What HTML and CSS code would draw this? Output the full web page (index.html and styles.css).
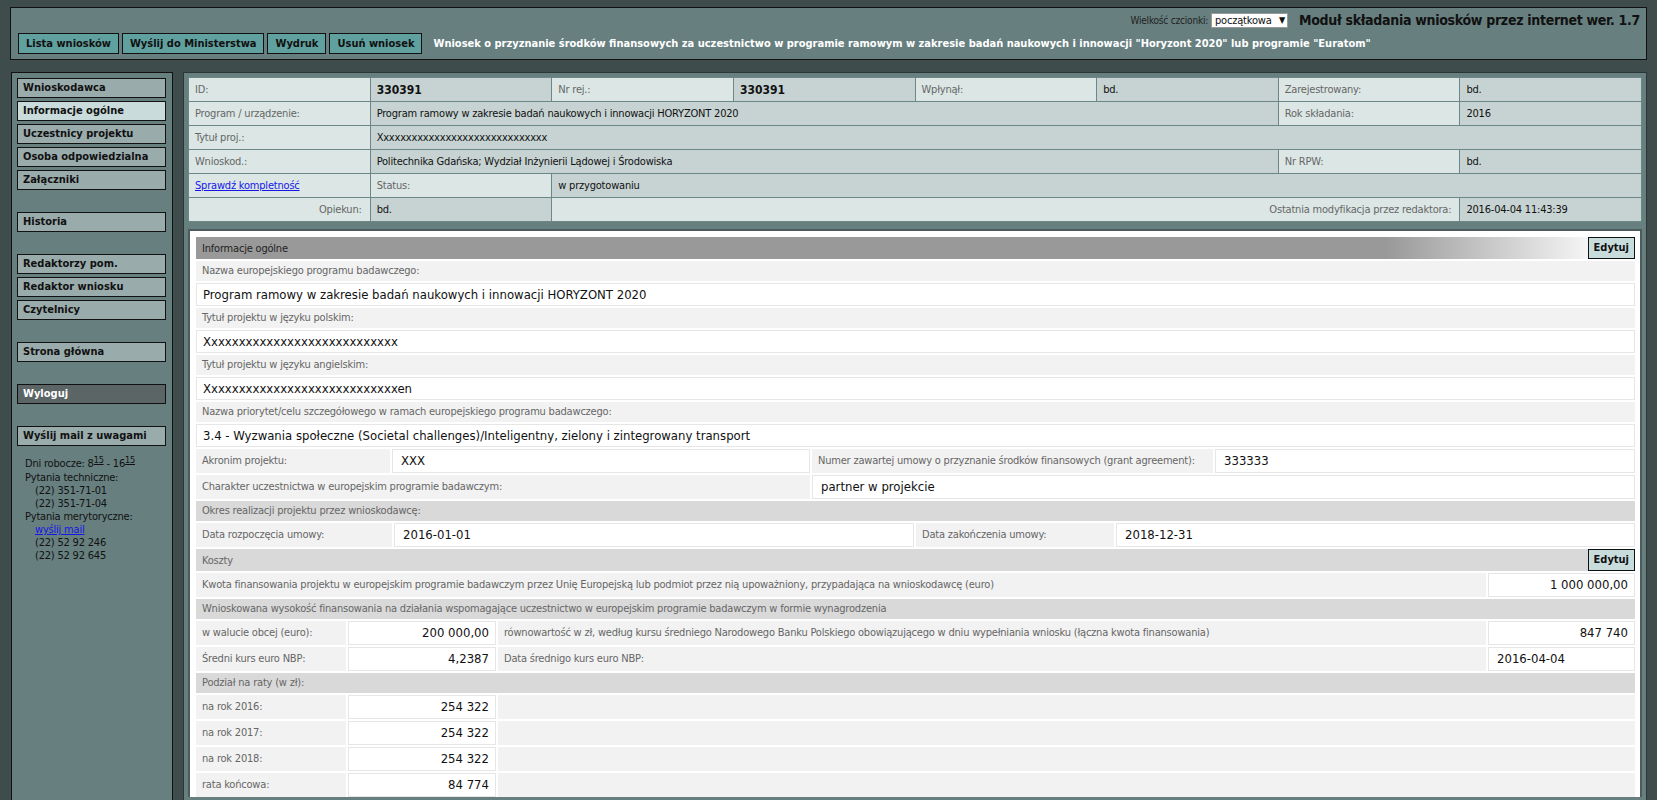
FILE: index.html
```html
<!DOCTYPE html>
<html lang="pl">
<head>
<meta charset="utf-8">
<title>Moduł składania wniosków</title>
<link rel="stylesheet" href="styles.css">
</head>
<body>
<div class="page">
  <header class="top">
    <div class="top-row1">
      <span class="fs-label">Wielkość czcionki:</span>
      <span class="select">początkowa<span class="arrow">▼</span></span>
      <span class="app-title">Moduł składania wniosków przez internet wer. 1.7</span>
    </div>
    <div class="top-row2">
      <span class="btn">Lista wniosków</span>
      <span class="btn">Wyślij do Ministerstwa</span>
      <span class="btn">Wydruk</span>
      <span class="btn">Usuń wniosek</span>
      <span class="doc-title">Wniosek o przyznanie środków finansowych za uczestnictwo w programie ramowym w zakresie badań naukowych i innowacji "Horyzont 2020" lub programie "Euratom"</span>
    </div>
  </header>

  <div class="layout">
    <aside class="sidebar">
      <div class="nav-item">Wnioskodawca</div>
      <div class="nav-item active">Informacje ogólne</div>
      <div class="nav-item">Uczestnicy projektu</div>
      <div class="nav-item">Osoba odpowiedzialna</div>
      <div class="nav-item">Załączniki</div>
      <div class="nav-item group">Historia</div>
      <div class="nav-item group">Redaktorzy pom.</div>
      <div class="nav-item">Redaktor wniosku</div>
      <div class="nav-item">Czytelnicy</div>
      <div class="nav-item group">Strona główna</div>
      <div class="nav-item group dark">Wyloguj</div>
      <div class="nav-item group">Wyślij mail z uwagami</div>
      <div class="contact">
        <div>Dni robocze: 8<span class="sup">15</span> - 16<span class="sup">15</span></div>
        <div>Pytania techniczne:</div>
        <div class="ind">(22) 351-71-01</div>
        <div class="ind">(22) 351-71-04</div>
        <div>Pytania merytoryczne:</div>
        <div class="ind"><a href="#">wyślij mail</a></div>
        <div class="ind">(22) 52 92 246</div>
        <div class="ind">(22) 52 92 645</div>
      </div>
    </aside>

    <main class="main">
      <table class="info">
        <colgroup>
          <col class="c"><col class="c"><col class="c"><col class="c"><col class="c"><col class="c"><col class="c"><col class="c">
        </colgroup>
        <tr>
          <td class="l">ID:</td><td class="v b">330391</td>
          <td class="l">Nr rej.:</td><td class="v b">330391</td>
          <td class="l">Wpłynął:</td><td class="v">bd.</td>
          <td class="l">Zarejestrowany:</td><td class="v">bd.</td>
        </tr>
        <tr>
          <td class="l">Program / urządzenie:</td><td class="v" colspan="5">Program ramowy w zakresie badań naukowych i innowacji HORYZONT 2020</td>
          <td class="l">Rok składania:</td><td class="v">2016</td>
        </tr>
        <tr>
          <td class="l">Tytuł proj.:</td><td class="v" colspan="7">Xxxxxxxxxxxxxxxxxxxxxxxxxxxxxx</td>
        </tr>
        <tr>
          <td class="l">Wnioskod.:</td><td class="v" colspan="5">Politechnika Gdańska; Wydział Inżynierii Lądowej i Środowiska</td>
          <td class="l">Nr RPW:</td><td class="v">bd.</td>
        </tr>
        <tr>
          <td class="l"><a href="#">Sprawdź kompletność</a></td><td class="l">Status:</td>
          <td class="v" colspan="6">w przygotowaniu</td>
        </tr>
        <tr>
          <td class="l r">Opiekun:</td><td class="v">bd.</td>
          <td class="l r" colspan="5">Ostatnia modyfikacja przez redaktora:</td><td class="v">2016-04-04 11:43:39</td>
        </tr>
      </table>

      <section class="panel">
        <div class="bar grad"><span>Informacje ogólne</span><span class="edit">Edytuj</span></div>
        <div class="lab">Nazwa europejskiego programu badawczego:</div>
        <div class="val">Program ramowy w zakresie badań naukowych i innowacji HORYZONT 2020</div>
        <div class="lab">Tytuł projektu w języku polskim:</div>
        <div class="val">Xxxxxxxxxxxxxxxxxxxxxxxxxxxx</div>
        <div class="lab">Tytuł projektu w języku angielskim:</div>
        <div class="val">Xxxxxxxxxxxxxxxxxxxxxxxxxxxxen</div>
        <div class="lab">Nazwa priorytet/celu szczegółowego w ramach europejskiego programu badawczego:</div>
        <div class="val">3.4 - Wyzwania społeczne (Societal challenges)/Inteligentny, zielony i zintegrowany transport</div>

        <div class="row r-akr">
          <div class="cl">Akronim projektu:</div><div class="cv">XXX</div>
          <div class="cl">Numer zawartej umowy o przyznanie środków finansowych (grant agreement):</div><div class="cv">333333</div>
        </div>
        <div class="row r-char">
          <div class="cl">Charakter uczestnictwa w europejskim programie badawczym:</div><div class="cv">partner w projekcie</div>
        </div>
        <div class="sec">Okres realizacji projektu przez wnioskodawcę:</div>
        <div class="row r-date">
          <div class="cl">Data rozpoczęcia umowy:</div><div class="cv">2016-01-01</div>
          <div class="cl">Data zakończenia umowy:</div><div class="cv">2018-12-31</div>
        </div>
        <div class="bar plain"><span>Koszty</span><span class="edit">Edytuj</span></div>
        <div class="row r-kw">
          <div class="cl">Kwota finansowania projektu w europejskim programie badawczym przez Unię Europejską lub podmiot przez nią upoważniony, przypadająca na wnioskodawcę (euro)</div><div class="cv num">1 000 000,00</div>
        </div>
        <div class="sec">Wnioskowana wysokość finansowania na działania wspomagające uczestnictwo w europejskim programie badawczym w formie wynagrodzenia</div>
        <div class="row r-wal">
          <div class="cl">w walucie obcej (euro):</div><div class="cv num">200 000,00</div>
          <div class="cl">równowartość w zł, według kursu średniego Narodowego Banku Polskiego obowiązującego w dniu wypełniania wniosku (łączna kwota finansowania)</div><div class="cv num">847 740</div>
        </div>
        <div class="row r-wal">
          <div class="cl">Średni kurs euro NBP:</div><div class="cv num">4,2387</div>
          <div class="cl">Data średnigo kurs euro NBP:</div><div class="cv">2016-04-04</div>
        </div>
        <div class="sec">Podział na raty (w zł):</div>
        <div class="row r-rat">
          <div class="cl">na rok 2016:</div><div class="cv num">254 322</div><div class="cl"></div>
        </div>
        <div class="row r-rat">
          <div class="cl">na rok 2017:</div><div class="cv num">254 322</div><div class="cl"></div>
        </div>
        <div class="row r-rat">
          <div class="cl">na rok 2018:</div><div class="cv num">254 322</div><div class="cl"></div>
        </div>
        <div class="row r-rat">
          <div class="cl">rata końcowa:</div><div class="cv num">84 774</div><div class="cl"></div>
        </div>
      </section>
    </main>
  </div>
</div>
</body>
</html>
```

FILE: styles.css
```css
html, body {
  margin: 0;
  padding: 0;
  background: #3e4c4c;
  font-family: "DejaVu Sans Condensed", "DejaVu Sans", sans-serif;
  font-size: 11px;
  letter-spacing: -0.2px;
  color: #111;
}

.page {
  padding: 7px 10px 0 10px;
  height: 800px;
  overflow: hidden;
  box-sizing: border-box;
  display: flex;
  flex-direction: column;
}

/* header */
.top {
  border: 1px solid #111;
  background: #677f7f;
  padding: 0 6px 5px 7px;
}
.top-row1 {
  height: 24px;
  display: flex;
  justify-content: flex-end;
  align-items: center;
}
.fs-label {
  font-size: 10px;
  color: #222;
  margin-right: 3px;
}
.select {
  background: #fff;
  border: 1px solid #999;
  height: 13px;
  width: 70px;
  padding: 0 2px 0 3px;
  font-size: 11px;
  line-height: 13px;
  display: flex;
  justify-content: space-between;
  color: #111;
}
.arrow {
  font-size: 9px;
}
.app-title {
  font-weight: bold;
  font-size: 14px;
  letter-spacing: -0.3px;
  margin-left: 11px;
  color: #111;
}
.top-row2 {
  margin-top: 1px;
  display: flex;
  align-items: center;
  gap: 3px;
}
.btn {
  height: 19px;
  line-height: 19px;
  padding: 0 7px;
  border: 1px solid #111;
  background: #60a09e;
  font-weight: bold;
  letter-spacing: 0;
  color: #111;
  white-space: nowrap;
}
.doc-title {
  margin-left: 8px;
  font-weight: bold;
  letter-spacing: 0;
  color: #fff;
  white-space: nowrap;
}

/* layout */
.layout {
  margin-top: 12px;
  flex: 1;
  display: flex;
  gap: 10px;
  min-height: 0;
}
.sidebar {
  margin-left: 1px;
  width: 149px;
  flex: none;
  border: 1px solid #111;
  border-bottom: none;
  background: #677f7f;
  padding: 5px 6px 0 5px;
}
.nav-item {
  height: 18px;
  line-height: 18px;
  border: 1px solid #111;
  background: #9aabab;
  font-weight: bold;
  letter-spacing: 0;
  padding-left: 5px;
  margin-bottom: 3px;
  white-space: nowrap;
}
.nav-item.active {
  background: #c9dbdb;
}
.nav-item.dark {
  background: #5b6565;
  color: #fff;
}
.nav-item.group {
  margin-top: 22px;
}
.contact {
  padding: 8px 0 0 8px;
  line-height: 13px;
  color: #111;
}
.contact .ind {
  padding-left: 10px;
}
.sup {
  font-size: 9px;
  text-decoration: underline;
  position: relative;
  top: -4px;
}
a {
  color: #1616e8;
  text-decoration: underline;
}

.main {
  flex: 1;
  border: 1px solid #2b3636;
  border-bottom: none;
  background: #677f7f;
  padding: 4px 4px 0 4px;
  min-width: 0;
}

/* info table */
.info {
  width: 100%;
  table-layout: fixed;
  border-collapse: collapse;
  border: 1px solid #4b5f5f;
}
.info td {
  height: 23px;
  padding: 0 0 0 6px;
  border: 1px solid #6d8787;
  white-space: nowrap;
  overflow: hidden;
  vertical-align: middle;
}
.info td.l {
  background: #dbe6e5;
  color: #666;
}
.info td.v {
  background: #c6d3d2;
  color: #111;
}
.info td.b {
  font-weight: bold;
  font-size: 12px;
  letter-spacing: 0;
}
.info td.r {
  text-align: right;
  padding-right: 8px;
}

/* panel */
.panel {
  margin-top: 7px;
  background: #fff;
  border: 2px solid #4c5b5b;
  border-bottom: none;
  padding: 6px 5px 0 6px;
  display: flex;
  flex-direction: column;
  gap: 2px;
}
.bar {
  height: 22px;
  flex: none;
  display: flex;
  justify-content: space-between;
  align-items: center;
  padding-left: 6px;
  color: #222;
}
.bar.grad {
  background: linear-gradient(to right, #999 0, #999 1190px, #f4f4f4 1390px, #fff 1441px);
}
.bar.plain {
  background: #d9d9d9;
  color: #666;
}
.edit {
  height: 20px;
  line-height: 20px;
  border: 1px solid #111;
  background: #c8dcdc;
  font-weight: bold;
  letter-spacing: 0;
  font-size: 11px;
  color: #111;
  padding: 0 5px;
}
.lab {
  height: 20px;
  flex: none;
  line-height: 20px;
  background: #f2f2f2;
  color: #666;
  padding-left: 6px;
}
.sec {
  height: 20px;
  flex: none;
  line-height: 20px;
  background: #d9d9d9;
  color: #666;
  padding-left: 6px;
  white-space: nowrap;
}
.val {
  height: 21px;
  flex: none;
  line-height: 21px;
  border: 1px solid #e6e6e6;
  font-size: 13px;
  letter-spacing: 0;
  padding-left: 6px;
  color: #111;
}
.row {
  display: grid;
  flex: none;
  gap: 2px;
  height: 24px;
}
.cl {
  background: #f2f2f2;
  color: #666;
  padding-left: 6px;
  line-height: 24px;
  white-space: nowrap;
  overflow: hidden;
}
.cv {
  border: 1px solid #e6e6e6;
  font-size: 13px;
  letter-spacing: 0;
  line-height: 22px;
  padding: 0 8px;
  color: #111;
  white-space: nowrap;
}
.cv.num {
  text-align: right;
  padding-right: 6px;
}
.r-akr { grid-template-columns: 194px 418px 401px 1fr; }
.r-char { grid-template-columns: 614px 1fr; }
.r-date { grid-template-columns: 196px 520px 198px 1fr; }
.r-kw { grid-template-columns: 1290px 1fr; }
.r-wal { grid-template-columns: 150px 148px 988px 1fr; }
.r-rat { grid-template-columns: 150px 148px 1fr; }
```
